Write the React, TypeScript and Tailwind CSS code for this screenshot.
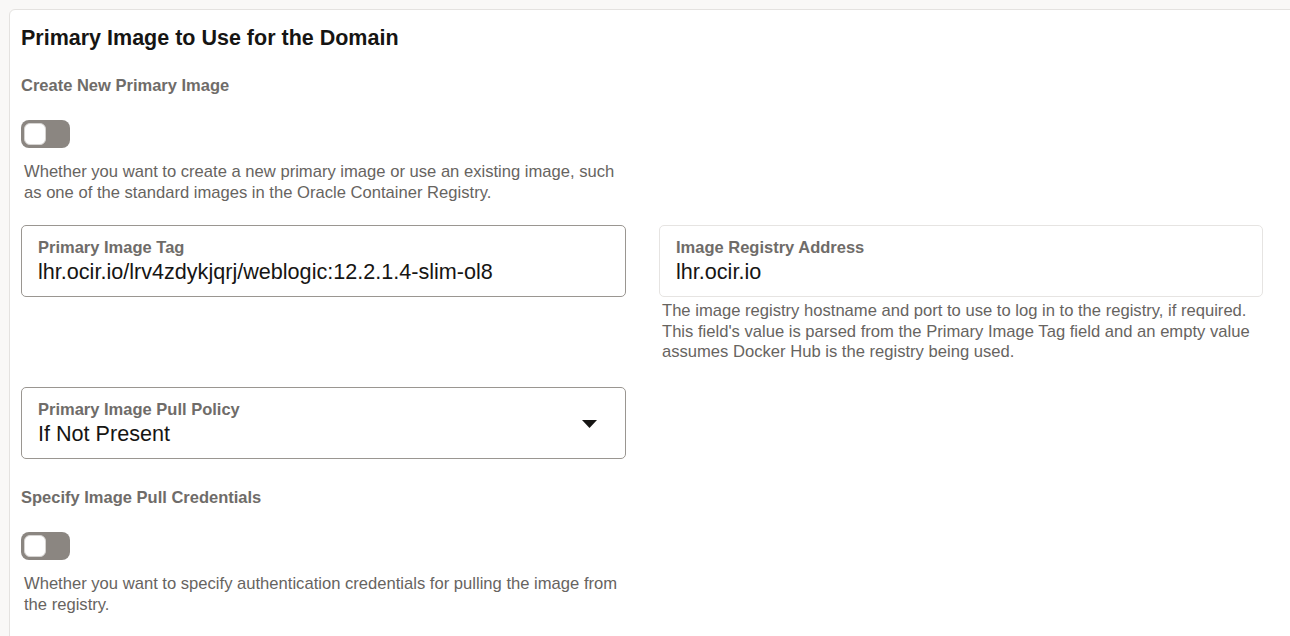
import React from 'react';

const font = { fontFamily: '"Liberation Sans", Arial, sans-serif' };

const Toggle: React.FC = () => (
  <div className="w-[49px] h-[28px] rounded-[8px] bg-[#8b8681] p-[3px] flex items-start">
    <div className="w-[22px] h-[22px] rounded-[6px] bg-white border border-[#d6d4d2]" />
  </div>
);

const SectionLabel: React.FC<{ text: string }> = ({ text }) => (
  <div className="text-[16.5px] leading-[20px] font-bold text-[#6f6c69]">{text}</div>
);

const Help: React.FC<{ children: React.ReactNode; className?: string }> = ({ children, className }) => (
  <p className={`pl-[3px] text-[16.6px] leading-[20.6px] text-[#67645f] ${className ?? ''}`}>{children}</p>
);

const Field: React.FC<{ label: string; value: string; readOnly?: boolean; select?: boolean }> = ({
  label,
  value,
  readOnly,
  select,
}) => (
  <div
    className={`h-[72px] rounded-[5px] border pl-[16px] pr-[28px] pt-[11px] flex items-start justify-between ${
      readOnly ? 'border-[#e6e4e2]' : 'border-[#9a9691]'
    }`}
  >
    <div className="flex flex-col">
      <span className="text-[16.5px] leading-[20px] font-bold text-[#6f6c69]">{label}</span>
      <span className="mt-[2px] text-[21.6px] leading-[26px] text-[#161513]">{value}</span>
    </div>
    {select && (
      <svg width="15" height="8" viewBox="0 0 15 8" className="mt-[21px]">
        <path d="M0 0 L15 0 L7.5 8 Z" fill="#161513" />
      </svg>
    )}
  </div>
);

export default function App() {
  return (
    <div className="w-[1290px] h-[636px] overflow-hidden bg-[#f9f8f7] pt-[9px] pl-[9px]" style={font}>
      <div className="w-[1320px] h-[700px] bg-white border border-[#e4e2e0] rounded-[6px] pl-[11px] pt-[14px]">
        <h2 className="text-[21.5px] leading-[28px] font-bold text-[#161513]">Primary Image to Use for the Domain</h2>

        <div className="mt-[23px]">
          <SectionLabel text="Create New Primary Image" />
        </div>
        <div className="mt-[25px]">
          <Toggle />
        </div>
        <Help className="mt-[14px] w-[610px]">
          Whether you want to create a new primary image or use an existing image, such as one of the standard images in the
          Oracle Container Registry.
        </Help>

        <div className="mt-[22px] grid grid-cols-[605px_604px] gap-x-[33px]">
          <Field label="Primary Image Tag" value="lhr.ocir.io/lrv4zdykjqrj/weblogic:12.2.1.4-slim-ol8" />
          <div className="flex flex-col">
            <Field label="Image Registry Address" value="lhr.ocir.io" readOnly />
            <Help className="mt-[4px]">
              The image registry hostname and port to use to log in to the registry, if required. This field's value is parsed
              from the Primary Image Tag field and an empty value assumes Docker Hub is the registry being used.
            </Help>
          </div>
        </div>

        <div className="mt-[24px] w-[605px]">
          <Field label="Primary Image Pull Policy" value="If Not Present" select />
        </div>

        <div className="mt-[28px]">
          <SectionLabel text="Specify Image Pull Credentials" />
        </div>
        <div className="mt-[25px]">
          <Toggle />
        </div>
        <Help className="mt-[14px] w-[610px]">
          Whether you want to specify authentication credentials for pulling the image from the registry.
        </Help>
      </div>
    </div>
  );
}
